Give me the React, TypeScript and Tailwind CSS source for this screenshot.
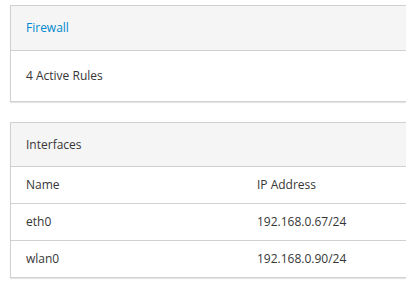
import React from "react";

const rows = [
  { name: "eth0", ip: "192.168.0.67/24" },
  { name: "wlan0", ip: "192.168.0.90/24" },
];

export default function App() {
  return (
    <div
      className="w-full h-[285px] overflow-hidden bg-white text-[12px] text-[#363636]"
      style={{ fontFamily: '"Open Sans", "Liberation Sans", sans-serif' }}
    >
      <div className="w-[464px] ml-[10px] pt-[5px]">
        <div className="border border-[#d1d1d1] bg-white shadow-[0_1px_1px_rgba(3,3,3,0.1)]">
          <div className="h-[45px] flex items-center px-[15px] bg-[#f5f5f5] border-b border-[#d1d1d1]">
            <a className="text-[#0088ce]">Firewall</a>
          </div>
          <div className="h-[50px] flex items-center px-[15px]">4 Active Rules</div>
        </div>

        <div className="mt-[20px] border border-[#d1d1d1] bg-white shadow-[0_1px_1px_rgba(3,3,3,0.1)]">
          <div className="h-[44px] flex items-center px-[15px] bg-[#f5f5f5] border-b border-[#d1d1d1]">
            Interfaces
          </div>
          <div className="flex h-[37px] items-center border-b border-[#d1d1d1]">
            <div className="w-[231px] px-[15px]">Name</div>
            <div className="px-[15px]">IP Address</div>
          </div>
          {rows.map((r, i) => (
            <div
              key={r.name}
              className={
                i < rows.length - 1
                  ? "flex h-[37px] items-center border-b border-[#d1d1d1]"
                  : "flex h-[36px] items-center"
              }
            >
              <div className="w-[231px] px-[15px]">{r.name}</div>
              <div className="px-[15px]">{r.ip}</div>
            </div>
          ))}
        </div>
      </div>
    </div>
  );
}
